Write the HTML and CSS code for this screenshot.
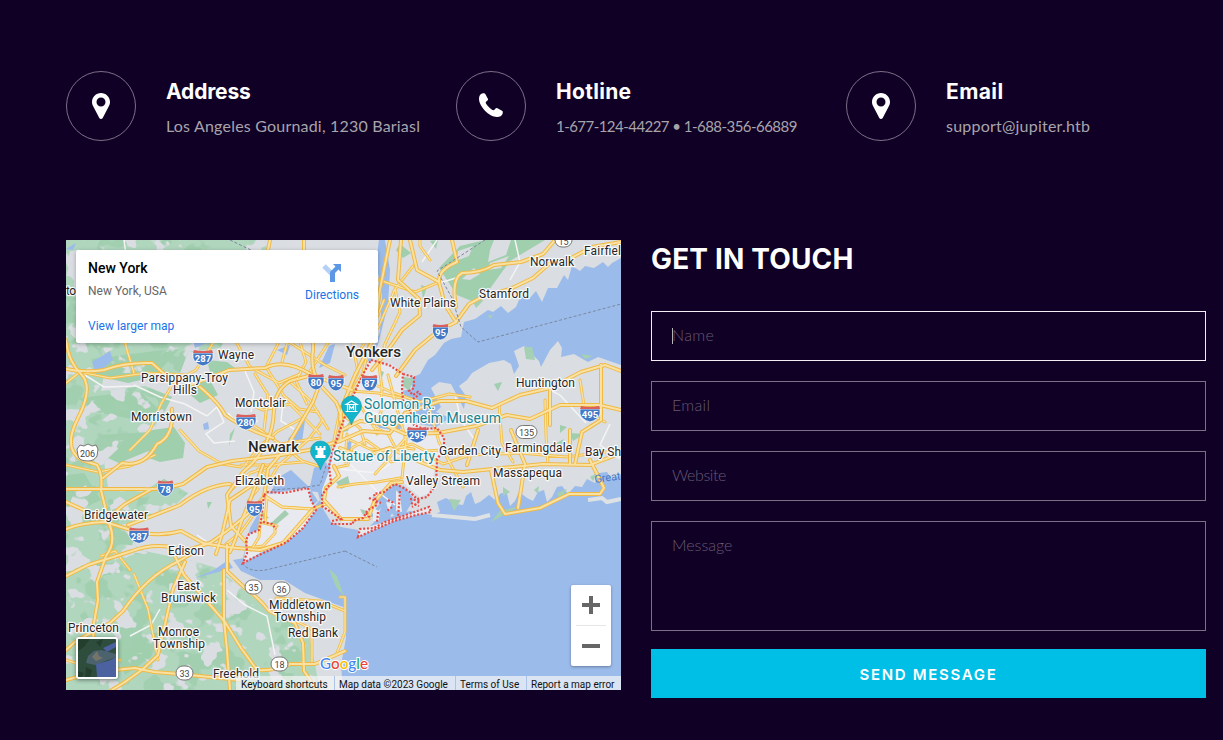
FILE: index.html
```html
<!DOCTYPE html>
<html lang="en">
<head>
<meta charset="utf-8">
<title>Contact</title>
<link rel="stylesheet" href="styles.css">
</head>
<body>
<main class="page">
  <section class="contacts">
    <article class="contact">
      <span class="ring"><svg width="18" height="26" viewBox="0 0 18 26"><path fill="#fff" fill-rule="evenodd" d="M9 0C4 0 0 4 0 9c0 2 .6 3.200 1.300 4.600L7.300 25c.7 1.300 2.700 1.300 3.400 0l6-11.400C17.400 12.200 18 11 18 9c0-5-4-9-9-9Zm0 4.500a4.500 4.500 0 1 1 0 9 4.500 4.500 0 0 1 0-9Z"/></svg></span>
      <div><h3 class="h-address">Address</h3><p class="p-address">Los Angeles Gournadi, 1230 Bariasl</p></div>
    </article>
    <article class="contact">
      <span class="ring"><svg class="phone" width="24" height="24" viewBox="0 0 24 24"><path fill="#fff" d="M0 6C0 3 1 1.300 3 .5 5 0 6 0 6.300 1L9 6c.6 1.200-2.300 2.600-2.300 3.600 0 2 5.800 7.700 7.700 7.700 1 0 2.400-2.900 3.600-2.300l5 2.700c1 .3 1 1.500.5 3.300-.8 2-2.500 3-5.500 3C10 24 0 13 0 6Z"/></svg></span>
      <div><h3 class="h-hotline">Hotline</h3><p class="p-hotline">1-677-124-44227 • 1-688-356-66889</p></div>
    </article>
    <article class="contact">
      <span class="ring"><svg width="18" height="26" viewBox="0 0 18 26"><path fill="#fff" fill-rule="evenodd" d="M9 0C4 0 0 4 0 9c0 2 .6 3.200 1.300 4.600L7.300 25c.7 1.300 2.700 1.300 3.400 0l6-11.400C17.400 12.200 18 11 18 9c0-5-4-9-9-9Zm0 4.500a4.500 4.500 0 1 1 0 9 4.500 4.500 0 0 1 0-9Z"/></svg></span>
      <div><h3 class="h-email">Email</h3><p class="p-email">support@jupiter.htb</p></div>
    </article>
  </section>
  <section class="columns">
    <div class="map">
      <svg class="map-art" width="555" height="450" viewBox="66 240 555 450">
        <defs>
          <filter id="towns" x="0" y="0" width="1" height="1" color-interpolation-filters="sRGB">
            <feTurbulence type="fractalNoise" baseFrequency=".045 .052" numOctaves="3" seed="7"/>
            <feColorMatrix values="0 0 0 0 .855  0 0 0 0 .867  0 0 0 0 .882  22 0 0 0 -12.800"/>
            <feComposite in2="SourceGraphic" operator="in"/>
          </filter>
          <filter id="woods" x="0" y="0" width="1" height="1" color-interpolation-filters="sRGB">
            <feTurbulence type="fractalNoise" baseFrequency=".033 .04" numOctaves="3" seed="21"/>
            <feColorMatrix values="0 0 0 0 .63  0 0 0 0 .81  0 0 0 0 .685  22 0 0 0 -12.400"/>
            <feComposite in2="SourceGraphic" operator="in"/>
          </filter>
          <path id="green" d="M66 240H265L271 270L220 348L188 352L178 378L147 372L104 374L101 391L145 386L172 397L158 425L133 435L104 462L108 487L142 492L164 479L188 493L169 511L121 525L139 550L189 560L217 568L238 585L269 610L308 630L320 690H66Z"/>
          <g id="major">
            <path d="M66 369Q85 373 104 370Q125 362 152 363Q166 376 181 388Q205 380 229 370L265 368Q285 358 312 375L352 390"/>
            <path d="M66 340Q68 361 81 374T78 418T82 460L97 465Q103 475 101 490L109 523Q117 542 106 556L97 582L98 600L94 623L93 640"/>
            <path d="M66 489H142Q162 490 183 484L207 467L232 461L275 456L309 450L340 441"/>
            <path d="M66 529Q80 523 105 522L131 530Q157 538 181 531L203 543L227 547L260 550L283 543L312 510"/>
            <path d="M172 409Q174 437 157 444Q144 468 122 463L103 478"/>
            <path d="M200 387Q220 404 225 415Q242 428 273 438"/>
            <path d="M312 375L290 381Q275 390 274 410T268 438Q263 455 243 472L227 495L231 526L246 542"/>
            <path d="M304 240V270L313 290V350Q310 370 320 385L336 402Q345 420 340 441"/>
            <path d="M270 240L266 260L274 269"/>
            <path d="M390 240L380 289L373 340L355 375L342 407L340 420"/>
            <path d="M401 240L398 280L419 299L420 315L402 330L388 350L372 370"/>
            <path d="M410 240L417 270L439 282L445 305L456 322L438 331L415 350L396 376"/>
            <path d="M456 322L469 304L484 296L510 289L533 278L549 264L571 258L592 247L621 242"/>
            <path d="M439 282Q438 270 457 262L452 240"/>
            <path d="M456 307Q451 279 462 273Q481 273 494 265L521 262L543 254L555 240"/>
            <path d="M340 441L363 431L390 433L405 413L440 401L466 401L492 408L520 395L550 388L581 372L605 365L621 371"/>
            <path d="M340 431L360 421L383 424L405 434L438 433L476 426L507 415L530 419L560 405L600 405L621 410"/>
            <path d="M340 448L362 457L390 448L415 460L440 470L463 472L502 468L543 464L590 465L621 453"/>
            <path d="M334 466L339 476L326 488L324 500L341 519H368L374 502L391 483L402 482"/>
            <path d="M105 522Q116 511 125 504L150 490M128 525Q158 514 180 505Q206 485 230 484"/>
            <path d="M66 502L95 515M66 576L88 565L132 551Q158 541 185 551L210 543Q247 518 264 497L268 469L288 445L313 402L322 378"/>
            <path d="M66 650L75 642Q91 632 110 623L123 611Q147 576 179 561L197 550"/>
            <path d="M227 545V571L245 588Q260 599 269 611L295 623L303 643L304 671L317 690"/>
            <path d="M224 570V620L227 650L230 690M185 562L173 589L158 655L143 669L125 682L112 690M172 550L184 575L225 622L241 648L257 670Q276 671 290 664H315L345 651"/>
            <path d="M66 680L95 672L135 668L154 672L180 674L240 680"/>
            <path d="M230 552L235 540L242 520L251 498L263 465M216 554L223 531L230 500L257 482"/>
            <path d="M491 470L498 503L505 514L540 508L569 494H600L604 488L590 460"/>
            <path d="M601 365V420L582 432L575 464M570 430V464M511 430L525 464L518 508M478 430L467 465M550 390V425"/>
          </g>
          <g id="minor">
            <path d="M66 383L80 372L110 378L147 373L187 375M121 325L127 350L134 373M215 340L196 370L174 382L161 404L150 430L130 450M235 340L250 367L279 383L300 374M180 430L199 451L222 464L241 467M253 425L280 444L320 438M330 340L310 371M240 400L263 410L290 404L320 434M289 381L310 400L328 429M286 340L325 365L345 375M264 496L282 507L312 509L326 504M338 487L355 484L377 482L400 478M66 660L82 665L120 660M134 574L148 609L158 660M130 570L115 551L101 556M276 598L320 601L345 611M275 611L312 629V663M340 597H345V632L337 653M66 465L98 472L130 466L155 455"/>
            <path d="M352 340L358 372L340 410L332 450M384 300L370 335L360 350M378 328L395 289L413 266M395 289L400 312L384 346M379 280L415 292L437 283M430 260L420 246V240M365 380L391 392L420 402L449 394L470 397M388 375L397 409L406 440L402 478M350 440L370 449L388 451L412 444L426 451L456 449M334 468L348 465L352 448L366 440L380 450L391 462L410 456L423 461M430 411L439 442L451 465L463 487M499 405L502 443L513 462M545 400L546 435L548 464M580 380L585 412L605 422M427 455L443 464L470 455L520 453L566 457L621 450M385 345L379 366L382 388L381 412L374 424L377 434M347 434L345 462M350 391L378 393L401 398M357 401L374 427L388 434L395 447L414 449M370 340L363 373L351 393L340 426M375 474L386 462L398 447L412 431M344 416L360 428L365 444M280 340L266 367L284 396L299 409L318 412M255 374L268 395L264 430M300 342L306 362L296 381L307 404M245 465L261 445L278 431L301 419M231 490L250 473L278 464L303 462M254 514L241 532L226 544M258 469L271 478L278 466L309 439L323 420M241 465L274 465M318 466L302 461L291 452M249 500L258 489M288 340L282 362"/>
          </g>
          <path id="staten-roads" d="M264 495L282 507L311 509M261 512L259 537L251 550M247 548L263 546L275 533L275 525M263 523L277 526M267 497L265 523"/>
        </defs>
        <rect x="66" y="240" width="555" height="450" fill="#dadde1"/>
        <use href="#green" fill="#b0d6be"/>
        <path fill="#a0cfae" d="M91 359L180 348L154 377L128 383L97 376ZM78 398L139 391L160 410L137 420L96 412ZM99 435L150 432L151 450L119 463L99 454ZM136 438L152 430L174 427L185 443L183 458L160 462L146 457L150 449ZM207 360L227 362L235 368L212 380ZM187 381L211 382L218 395L200 403L187 392ZM439 268L460 246L485 240H545L510 261L489 290L479 304L457 295ZM512 240L530 240L525 252ZM66 475L84 473L101 500L88 506L66 500ZM112 641L160 632L151 657L125 675ZM230 434L235 428L229 446ZM207 502L212 502L208 509ZM284 450L292 448L288 457ZM570 433L584 434L573 441ZM560 425L567 427L560 433ZM494 384L502 382L498 391ZM400 244l11 9-8 5-7-8zM421 285l6 2-4 12zM430 241l8-1-2 9zM510 241l16-1-5 8zM549 447l15-8-3 12z"/>
        <g filter="url(#woods)"><use href="#green"/></g>
        <g filter="url(#towns)"><use href="#green"/></g>
        <path fill="#dadde1" d="M458 251l15-5-4 10-13 5zM490 263l19-7-8 12-13 2zM494 240L511 240L506 255L488 262L490 250ZM462 279L474 268L480 274L470 280Z"/>
        <g class="water">
          <path d="M621 258L612 263L608 267L603 262L594 268L585 266L580 271L572 266L568 280L564 275L557 288L548 288L542 302L536 291L529 299L521 295L516 307L508 313L501 306L493 312L488 310L475 319L464 322L461 337L451 339L444 343L435 355L428 360L420 374L409 379L413 389L401 391L408 401L409 414L413 423L436 427L450 418L436 412L441 407L431 388L439 382L451 384L464 409L466 396L459 386L467 380L472 373L489 363L504 360L511 364L514 374L519 366L514 351L524 346L532 354L539 361L541 367L550 350L558 341L562 348L561 357L574 354L588 362L598 357L621 365Z"/>
          <path d="M621 474L612 480L607 472L599 473L595 483L587 479L582 487L575 486L568 494L562 486L557 487L552 497L547 502L544 490L538 492L533 501L527 498L519 492L515 501L510 506L507 494L501 493L495 500L489 495L480 502L475 504L471 492L466 496L463 505L456 504L446 498L437 502L440 512L432 515L410 511L390 517L400 498L413 498L405 487L394 485L381 495L380 516L360 536L358 530L341 527L331 522L322 507L317 489L321 472L327 470L334 447L349 407L361 376L380 332L382 295L376 262L379 240H385L390 270L388 305L378 344L365 376L349 407L340 441L334 460L328 486L320 500L298 524L260 550L245 558L233 560L241 571L260 580L284 580L305 593L346 608V638L341 665L343 690H621Z"/>
          <path d="M291 470L279 477L265 502L250 528L243 558L252 563L260 548L318 501L308 486ZM314 468L326 462L333 478L325 493L309 491ZM335 344L330 363L319 368L329 346ZM288 439L305 420L302 442L291 449ZM92 362L110 351L113 360L96 374ZM277 350L290 345L287 355ZM66 249L76 243L73 250ZM193 340L203 336L207 343L195 348ZM228 560L214 570L195 578L207 575L233 568ZM203 424l5-2 1 7-5 1z"/>
        </g>
        <path fill="#a5d0b3" d="M329 569L337 576L344 596L336 587ZM524 347L532 347L535 360L526 359ZM473 302L484 300L476 308ZM488 315L493 315L490 319ZM581 354L593 356L585 359ZM449 499L461 500L454 511ZM503 487L510 492L503 496ZM520 506L491 522L500 511ZM557 493L567 489L560 500ZM534 490l5-4-1 8zM590 477l7-4-4 8z"/>
        <path d="M432 515L475 519L490 515M588 500L602 498L607 502L621 499" fill="none" stroke="#dfe2e4" stroke-width="4"/>
        <path fill="#e9eaef" d="M264 495L293 490L309 488L311 500L316 510L303 528L287 542L260 553L243 563L245 552L248 535L258 530ZM368 361L393 365L403 374V391L408 405L410 422L425 427L444 437L442 449L436 464L429 493L420 497L402 482L388 488L378 500L372 518L343 523L324 507L322 490L329 471L334 449L344 418ZM358 537L360 529L385 522L403 516L429 507L431 512L416 515L394 521Z"/>
        <path fill="#a4cdb2" d="M285 510L289 514L277 524L269 525ZM404 377L414 379L409 391L403 386ZM348 476L350 485L341 489L336 482ZM261 510L269 518L263 519ZM349 422L353 419L348 431L343 432ZM360 509l8 2-5 4zM379 370l5 2-3 8z"/>
        <path class="water" d="M372 497L380 503L370 517H376L386 503L391 487L397 483L405 493L414 499L405 514L394 516L388 508L382 516L377 514L385 499ZM375 424L395 422L404 425L398 431L380 428ZM347 443L352 439L350 455L346 449Z"/>
        <path fill="#e9eaef" d="M396 490l4 5 2 17-6-1zM386 502l6 1-3 9zM373 508l6 3v10l-6 0z"/>
        <path d="M134 385L160 397L185 404L207 416M207 416L217 407L224 422L206 434L214 443L235 441M228 413L240 426L258 421M197 535L217 549M160 609L151 625L130 636M227 590L245 605L267 616L275 655M118 270L126 255L124 240M80 372L104 387L135 386M350 464L377 491L395 505M340 469L377 473L393 462M365 410L384 416M540 385L560 395L586 423M422 262L437 240M510 280L520 262L515 240M610 424L600 445L620 459M455 395L461 420L474 439M430 286L456 278M245 371L254 392L251 412M283 403L281 421L294 429" fill="none" stroke="#f4f4f5" stroke-width="1.500"/>
        <g fill="none" stroke-linejoin="round" stroke-linecap="round">
          <g stroke="#f2c04d" stroke-width="3"><use href="#minor"/><use href="#staten-roads"/></g>
          <g stroke="#fae4ad" stroke-width="1.200"><use href="#minor"/><use href="#staten-roads"/></g>
          <use href="#major" stroke="#efb944" stroke-width="4"/><use href="#major" stroke="#f9e1a4" stroke-width="2"/>
        </g>
        <path d="M230 240L255 252M485 240L437 271L452 298L461 327L478 342L621 304M345 551L377 567M242 563Q250 574 270 569L345 551M326 466L320 485L300 488L271 490" fill="none" stroke="#7b889e" stroke-dasharray="3 2"/>
        <path d="M264 495L268 492L284 493L308 488L311 500L316 510L303 528L287 542L272 549L257 556L243 563L247 553L246 540L249 534L259 530L261 521L264 495M263 522L272 524L276 529M371 360L389 365L403 374L402 389L403 400L411 412L414 425L424 429L437 428L444 438L444 450L437 459L436 485L427 497L417 499L410 492L402 487L395 484L384 492L374 494L377 505L368 510L363 518L353 521V524L332 524V521L341 519L328 510L322 506V495L331 483L329 466L333 450L349 405L362 376ZM403 374L414 377L414 388L409 391L413 395L418 392L420 394L413 399M358 537L360 529L374 528L385 522L403 516L429 507L431 512L416 515L394 521ZM369 498L381 503M392 507L386 512M400 491L398 518M410 499L420 501L412 507M378 512L377 522M366 513L371 519M411 503L419 506M388 500L394 503" fill="none" stroke="#e84a43" stroke-width="2.200" stroke-dasharray="2 1.800"/>

        <g class="shield-text">
          <g transform="translate(203 358)"><path class="shield" d="M-10-5H10V0Q8 6 0 8Q-8 6-10 0Z"/><path class="cap" d="M-9-8Q0-6 9-8L10-5H-10Z"/><text y="4">287</text></g>
          <g transform="translate(316 382)"><path class="shield" d="M-8-5H8V0Q6 7 0 8Q-6 7-8 0Z"/><path class="cap" d="M-7-8Q0-6 7-8L8-5H-8Z"/><text y="4">80</text></g>
          <g transform="translate(336 383)"><path class="shield" d="M-8-5H8V0Q6 7 0 8Q-6 7-8 0Z"/><path class="cap" d="M-7-8Q0-6 7-8L8-5H-8Z"/><text y="4">95</text></g>
          <g transform="translate(369.500 383)"><path class="shield" d="M-8-5H8V0Q6 7 0 8Q-6 7-8 0Z"/><path class="cap" d="M-7-8Q0-6 7-8L8-5H-8Z"/><text y="4">87</text></g>
          <g transform="translate(440.500 332)"><path class="shield" d="M-8-5H8V0Q6 7 0 8Q-6 7-8 0Z"/><path class="cap" d="M-7-8Q0-6 7-8L8-5H-8Z"/><text y="4">95</text></g>
          <g transform="translate(246 422)"><path class="shield" d="M-10-5H10V0Q8 6 0 8Q-8 6-10 0Z"/><path class="cap" d="M-9-8Q0-6 9-8L10-5H-10Z"/><text y="4">280</text></g>
          <g transform="translate(417 435)"><path class="shield" d="M-10-5H10V0Q8 6 0 8Q-8 6-10 0Z"/><path class="cap" d="M-9-8Q0-6 9-8L10-5H-10Z"/><text y="4">295</text></g>
          <g transform="translate(590 414)"><path class="shield" d="M-10-5H10V0Q8 6 0 8Q-8 6-10 0Z"/><path class="cap" d="M-9-8Q0-6 9-8L10-5H-10Z"/><text y="4">495</text></g>
          <g transform="translate(165.500 488.500)"><path class="shield" d="M-8-5H8V0Q6 7 0 8Q-6 7-8 0Z"/><path class="cap" d="M-7-8Q0-6 7-8L8-5H-8Z"/><text y="4">78</text></g>
          <g transform="translate(254.500 508.500)"><path class="shield" d="M-8-5H8V0Q6 7 0 8Q-6 7-8 0Z"/><path class="cap" d="M-7-8Q0-6 7-8L8-5H-8Z"/><text y="4">95</text></g>
          <g transform="translate(139 535.500)"><path class="shield" d="M-10-5H10V0Q8 6 0 8Q-8 6-10 0Z"/><path class="cap" d="M-9-8Q0-6 9-8L10-5H-10Z"/><text y="4">287</text></g>
        </g>
        <g class="route">
          <path d="M80 445L84 446L88 444L92 446L96 445L98 449L97 456Q94 461 88 461Q79 461 78 456L77 449Z"/><text x="87.500" y="457">206</text>
          <rect x="555" y="233" width="17" height="14" rx="7"/><text x="563.500" y="244.500">15</text>
          <rect x="516" y="425.500" width="21" height="13" rx="6.500"/><text x="526.500" y="435.500">135</text>
          <rect x="245" y="580" width="17" height="14" rx="7"/><text x="253.500" y="590.500">35</text>
          <rect x="273" y="582" width="17" height="14" rx="7"/><text x="281.500" y="592.500">36</text>
          <rect x="176" y="666" width="17" height="14" rx="7"/><text x="184.500" y="676.500">33</text>
          <rect x="271" y="657" width="17" height="14" rx="7"/><text x="279.500" y="667.500">18</text>
        </g>
        <g class="place">
          <text x="66" y="295" textLength="10">to</text>
          <text x="218" y="359" textLength="36">Wayne</text><text x="141" y="382" textLength="87">Parsippany-Troy</text><text x="173" y="394" textLength="24">Hills</text>
          <text x="235" y="407" textLength="51">Montclair</text><text x="131" y="421" textLength="61">Morristown</text>
          <text x="235" y="485" textLength="49">Elizabeth</text><text x="84" y="519" textLength="64">Bridgewater</text><text x="168" y="555" textLength="36">Edison</text>
          <text x="177" y="590" textLength="23">East</text><text x="161" y="602" textLength="55">Brunswick</text>
          <text x="269" y="609" textLength="62">Middletown</text><text x="274" y="621" textLength="52">Township</text><text x="288" y="637" textLength="50">Red Bank</text>
          <text x="68" y="632" textLength="51">Princeton</text><text x="158" y="636" textLength="41">Monroe</text><text x="153" y="648" textLength="52">Township</text><text x="213" y="678" textLength="46">Freehold</text>
          <text x="390" y="307" textLength="66">White Plains</text><text x="479" y="298" textLength="50">Stamford</text><text x="530" y="266" textLength="44">Norwalk</text><text x="584" y="255" textLength="37">Fairfiel</text>
          <text x="516" y="387" textLength="59">Huntington</text><text x="439" y="455" textLength="62">Garden City</text><text x="505" y="452" textLength="67">Farmingdale</text><text x="585" y="456" textLength="36">Bay Sh</text>
          <text x="406" y="485" textLength="74">Valley Stream</text><text x="493" y="477" textLength="69">Massapequa</text>
        </g>
        <g class="city"><text x="346" y="357" textLength="55" lengthAdjust="spacingAndGlyphs">Yonkers</text><text x="248" y="452" textLength="51" lengthAdjust="spacingAndGlyphs">Newark</text></g>
        <g class="poi"><text x="364" y="409" textLength="71">Solomon R.</text><text x="364" y="423" textLength="137">Guggenheim Museum</text><text x="333" y="461" textLength="102">Statue of Liberty</text></g>
        <text class="bay" x="595" y="483" textLength="26" transform="rotate(-8 595 483)">Great</text>
        <g fill="#12b5cb" stroke="#128f9d" stroke-width=".5">
          <path d="M351.500 396a10 10 0 0 0-10 10c0 7 7 9 10 19c3-10 10-12 10-19a10 10 0 0 0-10-10Z"/>
          <path d="M320.500 441a10 10 0 0 0-10 10c0 7 7 9 10 19c3-10 10-12 10-19a10 10 0 0 0-10-10Z"/>
        </g>
        <path fill="none" stroke="#fff" stroke-width="1.200" d="M346 404.500L351.500 401L357 404.500ZM347.500 405V411M355.500 405V411M345.500 411.500H357.500M349.500 410V406L351.500 408.500L353.500 406V410"/>
        <path fill="#fff" d="M315.500 446H317.500V448H319.500V446H321.500V448H323.500V446H325.500V450H323.500V455H325.500V458H315.500V455H317.500V450H315.500Z"/>
        <text class="google" x="320" y="669" textLength="48" lengthAdjust="spacingAndGlyphs"><tspan fill="#4285f4">G</tspan><tspan fill="#ea4335">o</tspan><tspan fill="#fbbc04">o</tspan><tspan fill="#4285f4">g</tspan><tspan fill="#34a853">l</tspan><tspan fill="#ea4335">e</tspan></text>
      </svg>
      <div class="place-card">
        <div><strong>New York</strong><p>New York, USA</p><a>View larger map</a></div>
        <div class="directions"><svg width="20" height="20" viewBox="0 0 20 20"><path d="M2 3L10 11" fill="none" stroke="#b4d0f4" stroke-width="5"/><path fill="#5c98e5" d="M11 1H19V9L16.500 6.500L13 10V19H8V10Q8 8 10 7L13.500 3.500Z"/></svg><a>Directions</a></div>
      </div>
      <div class="zoom"><svg width="40" height="81" viewBox="0 0 40 81"><path d="M11 20H29M20 11V29M11 61H29" stroke="#666" stroke-width="4"/><path d="M5 40.500H35" stroke="#e6e6e6"/></svg></div>
      <svg class="satellite" width="38" height="38" viewBox="0 0 38 38">
        <rect width="38" height="38" fill="#2f4d3c"/>
        <path fill="#243e2e" d="M0 0H12L6 8L0 12ZM18 3L25 0L22 8ZM0 32L6 34L4 38H0ZM8 28L14 31L12 38H7Z"/>
        <path fill="#4c626d" d="M10 17L16 12L23 11L38 15V18L30 21L17 26L8 24Z"/>
        <path fill="#75746b" d="M14 18L19 12L21 17L25 19L18 22Z"/>
        <path fill="#4b61a0" d="M18 25L30 22L38 18V38H19ZM25 9L38 3V8L29 13Z"/>
      </svg>
      <div class="legal"><span class="shortcuts">Keyboard shortcuts</span><span class="data">Map data ©2023 Google</span><span class="terms">Terms of Use</span><span class="report">Report a map error</span></div>
    </div>
    <form class="form">
      <h2>GET IN TOUCH</h2>
      <div class="field focused"><input class="i-name" placeholder="Name"><i class="caret"></i></div>
      <div class="field"><input class="i-email" placeholder="Email"></div>
      <div class="field"><input class="i-website" placeholder="Website"></div>
      <div class="field message"><textarea placeholder="Message"></textarea></div>
      <button type="button">SEND MESSAGE</button>
    </form>
  </section>
</main>
</body>
</html>
```

FILE: styles.css
```css
* { box-sizing: border-box; }
body { margin: 0; background: #100026; font-family: Lato, sans-serif; overflow: hidden; }
h2, h3, p { margin: 0; }
.page { height: 740px; padding: 71px 17px 0 66px; }
.contacts { display: grid; grid-template-columns: repeat(3, 390px); height: 169px; }
.contact { display: flex; align-items: flex-start; gap: 30px; white-space: nowrap; }
.ring { width: 70px; height: 70px; flex: none; display: flex; align-items: center; justify-content: center; border: 1px solid #7b7087; border-radius: 50%; }
.phone { margin-top: -3px; }
.contact h3 { color: #fff; font: 700 21px/28px Inter, sans-serif; padding-top: 7px; letter-spacing: -.15px; }
.contact .h-hotline { letter-spacing: .3px; }
.contact .h-email { letter-spacing: .4px; }
.contact p { color: #a8a5aa; font-size: 16px; line-height: 24px; padding-top: 8px; }
.p-address { letter-spacing: .2px; }
.contact .p-hotline { font-size: 15px; letter-spacing: -.54px; }
.p-email { letter-spacing: .22px; }
.columns { display: grid; grid-template-columns: 555px 555px; gap: 30px; }
.map { position: relative; height: 450px; overflow: hidden; font-family: Roboto, sans-serif; }
.map-art { display: block; }
.water { fill: #9bbbea; }
.shield { fill: #4179c6; stroke: #fff; stroke-width: .7; }
.cap { fill: #d8605d; }
.shield-text text { fill: #fff; font: 700 9.5px Roboto, sans-serif; text-anchor: middle; }
.route path, .route rect { fill: #fff; stroke: #777; }
.route text { fill: #444; font: 9px Roboto, sans-serif; text-anchor: middle; }
.place text, .city text, .poi text { fill: #262626; font: 12px Roboto, sans-serif; stroke: #f8f8f8; stroke-width: 2.5px; paint-order: stroke; stroke-linejoin: round; }
.city text { font-size: 15px; font-weight: 500; }
.poi text { font-size: 14px; fill: #168391; }
.bay { fill: #4779c7; font: 11px Roboto, sans-serif; }
.google { font: 500 15px Lato, sans-serif; stroke: #fff; stroke-width: 2px; paint-order: stroke; }
.place-card { position: absolute; left: 10px; top: 10px; width: 302px; height: 93px; padding: 10px 19px 0 12px; background: #fff; border-radius: 2px; box-shadow: 0 1px 4px #0004; display: flex; justify-content: space-between; font-size: 12px; line-height: 16px; }
.place-card strong { display: block; font-size: 14px; font-weight: 500; }
.place-card p { color: #666; padding-top: 7px; }
.place-card a { display: block; color: #1a73e8; }
.place-card p + a { padding-top: 19px; }
.directions { padding-top: 3px; text-align: center; }
.directions svg { display: block; margin: 0 auto 3px; }
.directions a { padding-top: 1px; }
.zoom { position: absolute; left: 505px; top: 345px; width: 40px; height: 81px; background: #fff; border-radius: 2px; box-shadow: 0 1px 3px #0005; }
.satellite { position: absolute; left: 10px; top: 397px; width: 42px; height: 42px; border: 2px solid #fff; border-radius: 3px; box-shadow: 0 1px 4px #0007; }
.legal { position: absolute; right: 0; bottom: 0; height: 14px; display: flex; font-size: 10px; line-height: 17px; color: #111; white-space: nowrap; }
.legal span { padding-left: 5px; background: #f5f5f5b3; border-left: 1px solid #aac3e7; height: 14px; }
.legal .shortcuts { width: 98px; border-left: 0; }
.legal .data { width: 121px; padding-left: 4px; }
.legal .terms { width: 71px; padding-left: 4px; }
.legal .report { width: 95px; padding-left: 4px; }
.form { display: flex; flex-direction: column; gap: 20px; }
.form h2 { height: 51px; color: #fff; font: 700 28px/38px Inter, sans-serif; letter-spacing: .15px; white-space: nowrap; }
.field { position: relative; height: 50px; border: 1px solid #7c7086; }
.field.focused { border-color: #f1eef5; }
.field.message { height: 110px; }
.field input, .field textarea { display: block; width: 100%; height: 100%; border: 0; padding: 0 20px 3px; outline: 0; background: transparent; resize: none; font: 300 16px/24px Lato, sans-serif; color: #fff; }
.field textarea { padding-top: 11px; }
.field .i-name { letter-spacing: .4px; }
.field .i-email { letter-spacing: .3px; }
.field .i-website { letter-spacing: -.4px; }
::placeholder { color: #665a71; opacity: 1; }
.caret { position: absolute; left: 20px; top: 16px; width: 1px; height: 16px; background: #b7b3bb; }
.form button { height: 49px; margin-top: -2px; border: 0; padding: 2px 0 0; background: #00bfe7; color: #fff; font: 600 15px Inter, sans-serif; letter-spacing: 1.7px; }
```
